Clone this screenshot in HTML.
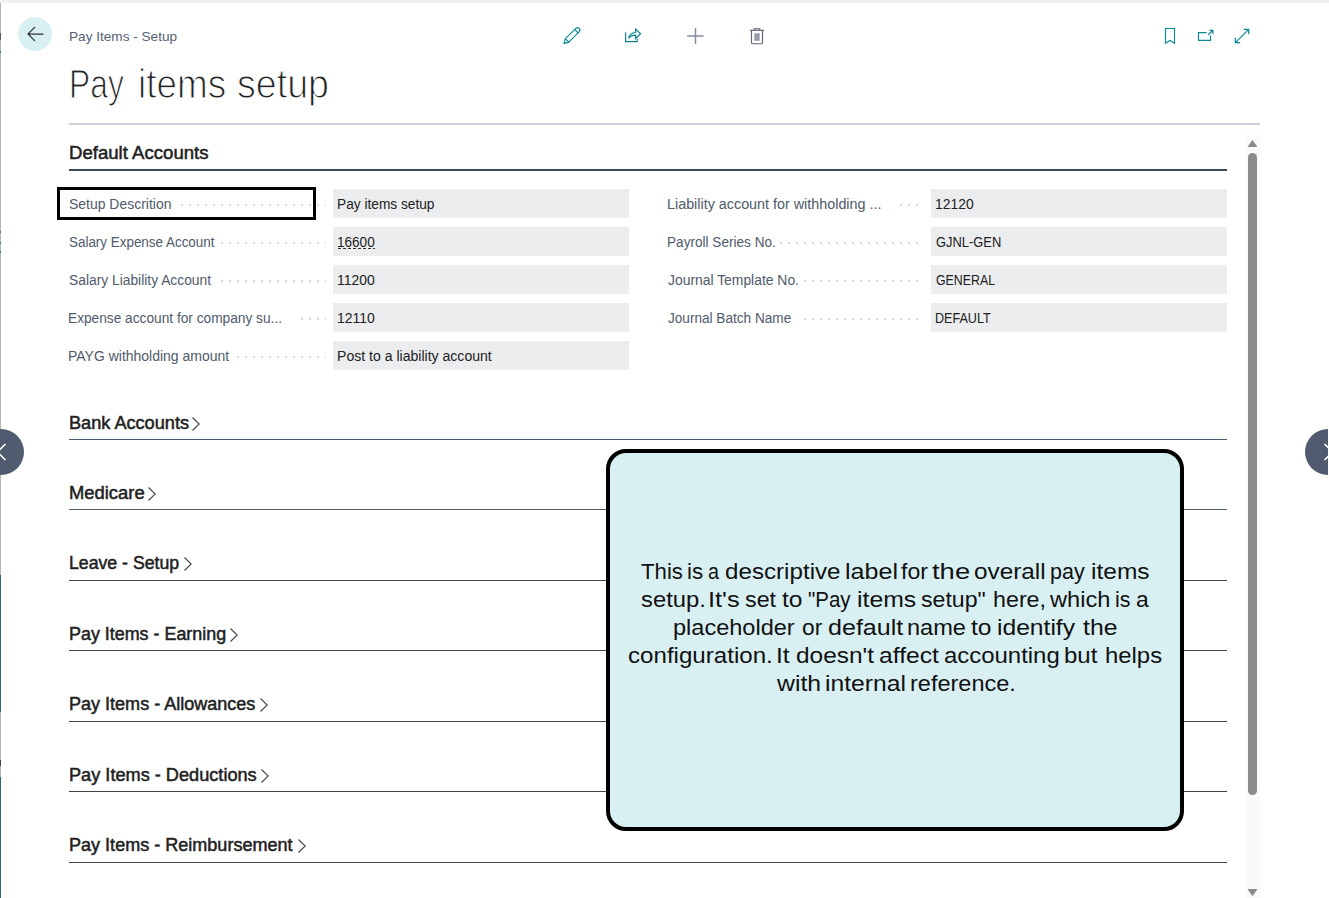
<!DOCTYPE html>
<html lang="en">
<head>
<meta charset="utf-8">
<title>Pay Items - Setup</title>
<style>
html,body{margin:0;padding:0;background:#fff;}
body{width:1329px;height:898px;position:relative;overflow:hidden;font-family:"Liberation Sans",sans-serif;}
.abs{position:absolute;}
.t{position:absolute;white-space:nowrap;transform-origin:0 0;margin:0;padding:0;}
.fld{position:absolute;background:#ecedef;height:29px;width:296px;}
.rule{position:absolute;left:69px;width:1158px;height:1px;background:#444;}
.dots{position:absolute;height:2px;background-image:linear-gradient(90deg,#d6d9de 0,#d6d9de 2px,transparent 2px);background-size:8px 2px;background-repeat:repeat-x;}
svg{position:absolute;overflow:visible;}
</style>
</head>
<body>
<!-- window chrome -->
<div class="abs" style="left:0;top:0;width:1329px;height:3px;background:#f0f0f0"></div>
<div class="abs" style="left:0;top:3px;width:1px;height:895px;background:#b6b6b6"></div>
<div class="abs" style="left:0;top:33px;width:1px;height:7px;background:#515a68"></div>
<div class="abs" style="left:0;top:51px;width:1px;height:2px;background:#3a8088"></div>
<div class="abs" style="left:0;top:231px;width:1px;height:2px;background:#3a8088"></div>
<div class="abs" style="left:0;top:242px;width:1px;height:2px;background:#3a8088"></div>
<div class="abs" style="left:0;top:251px;width:1px;height:2px;background:#3a8088"></div>
<div class="abs" style="left:0;top:575px;width:1px;height:137px;background:#2a6870"></div>
<div class="abs" style="left:0;top:760px;width:1px;height:6px;background:#444"></div>
<div class="abs" style="left:0;top:777px;width:1px;height:121px;background:#2a6870"></div>

<!-- back button -->
<div class="abs" style="left:18px;top:17px;width:34px;height:34px;border-radius:50%;background:#d9f0f3"></div>
<svg style="left:18px;top:17px" width="34" height="34" viewBox="0 0 34 34"><path d="M25 17H10.2M16.6 10.4L10 17l6.6 6.6" fill="none" stroke="#333" stroke-width="1.25" stroke-linecap="round" stroke-linejoin="miter"/></svg>

<!-- toolbar icons -->
<svg style="left:560px;top:24px" width="24" height="24" viewBox="0 0 24 24" fill="none" stroke="#0b8791" stroke-width="1.15" stroke-linejoin="round" stroke-linecap="round">
 <path d="M3.9 19.6l1.5-4.9L15.9 4.4a2.3 2.3 0 0 1 3.3 3.3L8.8 18.1z"/><path d="M5.4 14.7l3.4 3.4M14.8 5.6l3.3 3.3"/>
</svg>
<svg style="left:621px;top:24px" width="24" height="24" viewBox="0 0 24 24" fill="none" stroke="#0b8791" stroke-width="1.2" stroke-linejoin="miter">
 <path d="M4.6 8.3v9.3h11.6v-2.9"/><path d="M7.6 14.4c.6-3.6 3-5.8 7-5.9V5.1l5 4.7-5 4.7v-3.3c-3.100-.1-5.300.9-7 3.200z"/>
</svg>
<svg style="left:683px;top:24px" width="24" height="24" viewBox="0 0 24 24" fill="none" stroke="#858c9b" stroke-width="1.5">
 <path d="M12.500 4v16M4.200 12h16.400"/>
</svg>
<svg style="left:745px;top:24px" width="24" height="24" viewBox="0 0 24 24" fill="none" stroke="#5b6375" stroke-width="1.15">
 <path d="M5 6.300h14"/><path d="M9.300 6.200v-1.500h5.400v1.500"/><path d="M6.500 6.500v12.300a.9.9 0 0 0 .9.900h9.200a.9.900 0 0 0 .9-.900V6.500"/><path d="M9.200 9.300v7.500h5.600V9.300z" fill="#a3a9b5" stroke="none"/><path d="M10.900 9.300v7.500M13.100 9.300v7.500" stroke="#7d8494" stroke-width=".7"/>
</svg>
<svg style="left:1158px;top:24px" width="24" height="24" viewBox="0 0 24 24" fill="none" stroke="#0b8791" stroke-width="1.15" stroke-linejoin="miter">
 <path d="M7.500 4.500h9v14.800l-4.500-2.800-4.500 2.800z"/>
</svg>
<svg style="left:1194px;top:24px" width="24" height="24" viewBox="0 0 24 24" fill="none" stroke="#0b8791" stroke-width="1.2" stroke-linejoin="miter">
 <path d="M12.600 8.600H4.500v7.700h12v-4.800"/><path d="M14.200 11l4.600-4.600M15.300 6.300h3.600v3.600"/>
</svg>
<svg style="left:1230px;top:24px" width="24" height="24" viewBox="0 0 24 24" fill="none" stroke="#0b8791" stroke-width="1.2" stroke-linejoin="miter">
 <path d="M5.400 18.600L18.600 5.400M13.800 5.300h4.900v4.900M5.300 13.800v4.900h4.900"/>
</svg>

<!-- header rule -->
<div class="abs" style="left:69px;top:123px;width:1191px;height:2px;background:#cdd1d7"></div>

<!-- Default accounts rule -->
<div class="abs" style="left:69px;top:169px;width:1158px;height:2px;background:#3c485c"></div>

<!-- fields -->
<div class="fld" style="left:333px;top:189px"></div>
<div class="fld" style="left:333px;top:227px"></div>
<div class="fld" style="left:333px;top:265px"></div>
<div class="fld" style="left:333px;top:303px"></div>
<div class="fld" style="left:333px;top:341px"></div>
<div class="fld" style="left:931px;top:189px"></div>
<div class="fld" style="left:931px;top:227px"></div>
<div class="fld" style="left:931px;top:265px"></div>
<div class="fld" style="left:931px;top:303px"></div>

<!-- dotted leaders -->
<div class="dots" style="left:181px;top:204px;width:145px"></div>
<div class="dots" style="left:221px;top:242px;width:105px"></div>
<div class="dots" style="left:221px;top:280px;width:105px"></div>
<div class="dots" style="left:301px;top:318px;width:25px"></div>
<div class="dots" style="left:237px;top:356px;width:89px"></div>
<div class="dots" style="left:900px;top:204px;width:18px"></div>
<div class="dots" style="left:780px;top:242px;width:138px"></div>
<div class="dots" style="left:804px;top:280px;width:114px"></div>
<div class="dots" style="left:804px;top:318px;width:114px"></div>

<!-- focus box -->
<div class="abs" style="left:57px;top:187px;width:253px;height:27px;border:3px solid #000"></div>

<!-- lookup underline -->
<div class="abs" style="left:338px;top:248px;width:37px;height:1px;background-image:linear-gradient(90deg,#333 0,#333 3px,transparent 3px);background-size:5px 1px"></div>

<!-- collapsed group rules -->
<div class="rule" style="top:439px;background:#4e5a6e"></div>
<div class="rule" style="top:509px;background:#4e5a6e"></div>
<div class="rule" style="top:580px"></div>
<div class="rule" style="top:650px"></div>
<div class="rule" style="top:721px"></div>
<div class="rule" style="top:791px"></div>
<div class="rule" style="top:862px"></div>

<!-- chevrons -->
<svg style="left:191.4px;top:416.0px" width="10" height="16" viewBox="0 0 10 16"><path d="M1.500 1.500L8.200 8l-6.700 6.500" fill="none" stroke="#444" stroke-width="1.100"/></svg>
<svg style="left:147.2px;top:486.0px" width="10" height="16" viewBox="0 0 10 16"><path d="M1.500 1.500L8.200 8l-6.700 6.500" fill="none" stroke="#444" stroke-width="1.100"/></svg>
<svg style="left:182.9px;top:556.0px" width="10" height="16" viewBox="0 0 10 16"><path d="M1.500 1.500L8.200 8l-6.700 6.500" fill="none" stroke="#444" stroke-width="1.100"/></svg>
<svg style="left:229.2px;top:627.0px" width="10" height="16" viewBox="0 0 10 16"><path d="M1.500 1.500L8.200 8l-6.700 6.500" fill="none" stroke="#444" stroke-width="1.100"/></svg>
<svg style="left:259.0px;top:697.0px" width="10" height="16" viewBox="0 0 10 16"><path d="M1.500 1.500L8.200 8l-6.700 6.500" fill="none" stroke="#444" stroke-width="1.100"/></svg>
<svg style="left:260.0px;top:768.0px" width="10" height="16" viewBox="0 0 10 16"><path d="M1.500 1.500L8.200 8l-6.700 6.500" fill="none" stroke="#444" stroke-width="1.100"/></svg>
<svg style="left:296.5px;top:838.0px" width="10" height="16" viewBox="0 0 10 16"><path d="M1.500 1.500L8.200 8l-6.700 6.500" fill="none" stroke="#444" stroke-width="1.100"/></svg>

<!-- scrollbar -->
<div class="abs" style="left:1245px;top:135px;width:15px;height:763px;background:#fafafa"></div>
<div class="abs" style="left:1248px;top:153px;width:9px;height:642px;border-radius:4.5px;background:#8b8b8b"></div>
<svg style="left:1245px;top:135px" width="15" height="15" viewBox="0 0 15 15"><path d="M3.300 11.500L7.500 5.500l4.200 6z" fill="#8b8b8b" stroke="#8b8b8b" stroke-width="1" stroke-linejoin="round"/></svg>
<svg style="left:1245px;top:883px" width="15" height="15" viewBox="0 0 15 15"><path d="M3.300 6.500L7.500 12.500l4.200-6z" fill="#8b8b8b" stroke="#8b8b8b" stroke-width="1" stroke-linejoin="round"/></svg>

<!-- prev / next -->
<div class="abs" style="left:-22px;top:429px;width:46px;height:46px;border-radius:50%;background:#505b6f"></div>
<svg style="left:-8px;top:440px" width="24" height="24" viewBox="0 0 24 24"><path d="M13.500 4L5.200 12l8.300 8" fill="none" stroke="#fff" stroke-width="1.600"/></svg>
<div class="abs" style="left:1305px;top:429px;width:23px;height:46px;overflow:hidden"><div style="width:46px;height:46px;border-radius:50%;background:#505b6f"></div></div>
<div class="abs" style="left:1305px;top:429px;width:23px;height:46px;overflow:hidden"><svg style="left:8.500px;top:11px" width="24" height="24" viewBox="0 0 24 24"><path d="M10.500 4l8.300 8-8.300 8" fill="none" stroke="#fff" stroke-width="1.600"/></svg></div>

<!-- callout -->
<div class="abs" style="left:606px;top:449px;width:570px;height:374px;border:4px solid #000;border-radius:20px;background:#d9f0f3"></div>

<!-- text -->
<div class="t" style="left:68.64px;top:28.00px;font-size:12.8px;line-height:17px;color:#566176;font-family:'Liberation Sans',sans-serif;transform:scaleX(1.0623)">Pay Items - Setup</div>
<div class="cl">
<span class="t" style="left:69.13px;top:56.00px;font-size:41.5px;line-height:56px;color:#212121;font-family:'Liberation Sans',sans-serif;-webkit-text-stroke:1.15px #fff;transform:scaleX(0.7669)">Pay </span>
<span class="t" style="left:138.21px;top:56.00px;font-size:41.5px;line-height:56px;color:#212121;font-family:'Liberation Sans',sans-serif;-webkit-text-stroke:1.15px #fff;transform:scaleX(0.8885)">items </span>
<span class="t" style="left:237.29px;top:56.00px;font-size:41.5px;line-height:56px;color:#212121;font-family:'Liberation Sans',sans-serif;-webkit-text-stroke:1.15px #fff;transform:scaleX(0.9059)">setup </span>
</div>
<div class="t" style="left:69.11px;top:141.00px;font-size:18.0px;line-height:24px;color:#212121;font-family:'Liberation Sans',sans-serif;-webkit-text-stroke:0.5px currentColor;transform:scaleX(1.0330)">Default Accounts</div>
<div class="t" style="left:68.64px;top:195.00px;font-size:13.8px;line-height:19px;color:#4f5a6b;font-family:'Liberation Sans',sans-serif;transform:scaleX(1.0121)">Setup Descrition</div>
<div class="t" style="left:68.77px;top:233.00px;font-size:13.8px;line-height:19px;color:#4f5a6b;font-family:'Liberation Sans',sans-serif;transform:scaleX(0.9728)">Salary Expense Account</div>
<div class="t" style="left:68.75px;top:271.00px;font-size:13.8px;line-height:19px;color:#4f5a6b;font-family:'Liberation Sans',sans-serif;transform:scaleX(1.0014)">Salary Liability Account</div>
<div class="t" style="left:68.46px;top:309.00px;font-size:13.8px;line-height:19px;color:#4f5a6b;font-family:'Liberation Sans',sans-serif;transform:scaleX(0.9930)">Expense account for company su...</div>
<div class="t" style="left:68.43px;top:347.00px;font-size:13.8px;line-height:19px;color:#4f5a6b;font-family:'Liberation Sans',sans-serif;transform:scaleX(1.0136)">PAYG withholding amount</div>
<div class="t" style="left:667.10px;top:195.00px;font-size:13.8px;line-height:19px;color:#4f5a6b;font-family:'Liberation Sans',sans-serif;transform:scaleX(1.0395)">Liability account for withholding ...</div>
<div class="t" style="left:667.17px;top:233.00px;font-size:13.8px;line-height:19px;color:#4f5a6b;font-family:'Liberation Sans',sans-serif;transform:scaleX(0.9852)">Payroll Series No.</div>
<div class="t" style="left:668.15px;top:271.00px;font-size:13.8px;line-height:19px;color:#4f5a6b;font-family:'Liberation Sans',sans-serif;transform:scaleX(1.0066)">Journal Template No.</div>
<div class="t" style="left:668.15px;top:309.00px;font-size:13.8px;line-height:19px;color:#4f5a6b;font-family:'Liberation Sans',sans-serif;transform:scaleX(0.9855)">Journal Batch Name</div>
<div class="t" style="left:336.76px;top:195.00px;font-size:13.8px;line-height:19px;color:#212121;font-family:'Liberation Sans',sans-serif;transform:scaleX(0.9932)">Pay items setup</div>
<div class="t" style="left:337.42px;top:233.00px;font-size:13.8px;line-height:19px;color:#212121;font-family:'Liberation Sans',sans-serif;transform:scaleX(0.9823)">16600</div>
<div class="t" style="left:337.39px;top:271.00px;font-size:13.8px;line-height:19px;color:#212121;font-family:'Liberation Sans',sans-serif;transform:scaleX(1.0098)">11200</div>
<div class="t" style="left:337.39px;top:309.00px;font-size:13.8px;line-height:19px;color:#212121;font-family:'Liberation Sans',sans-serif;transform:scaleX(1.0098)">12110</div>
<div class="t" style="left:336.73px;top:347.00px;font-size:13.8px;line-height:19px;color:#212121;font-family:'Liberation Sans',sans-serif;transform:scaleX(1.0193)">Post to a liability account</div>
<div class="t" style="left:935.39px;top:195.00px;font-size:13.8px;line-height:19px;color:#212121;font-family:'Liberation Sans',sans-serif;transform:scaleX(1.0068)">12120</div>
<div class="t" style="left:935.70px;top:233.00px;font-size:13.8px;line-height:19px;color:#212121;font-family:'Liberation Sans',sans-serif;transform:scaleX(0.9353)">GJNL-GEN</div>
<div class="t" style="left:935.73px;top:271.00px;font-size:13.8px;line-height:19px;color:#212121;font-family:'Liberation Sans',sans-serif;transform:scaleX(0.8958)">GENERAL</div>
<div class="t" style="left:935.26px;top:309.00px;font-size:13.8px;line-height:19px;color:#212121;font-family:'Liberation Sans',sans-serif;transform:scaleX(0.9109)">DEFAULT</div>
<div class="t" style="left:68.94px;top:411.00px;font-size:18.0px;line-height:24px;color:#212121;font-family:'Liberation Sans',sans-serif;-webkit-text-stroke:0.5px currentColor;transform:scaleX(1.0077)">Bank Accounts</div>
<div class="t" style="left:68.92px;top:481.00px;font-size:18.0px;line-height:24px;color:#212121;font-family:'Liberation Sans',sans-serif;-webkit-text-stroke:0.5px currentColor;transform:scaleX(1.0215)">Medicare</div>
<div class="t" style="left:69.07px;top:551.00px;font-size:18.0px;line-height:24px;color:#212121;font-family:'Liberation Sans',sans-serif;-webkit-text-stroke:0.5px currentColor;transform:scaleX(0.9823)">Leave - Setup</div>
<div class="t" style="left:69.06px;top:622.00px;font-size:18.0px;line-height:24px;color:#212121;font-family:'Liberation Sans',sans-serif;-webkit-text-stroke:0.5px currentColor;transform:scaleX(0.9942)">Pay Items - Earning</div>
<div class="t" style="left:69.05px;top:692.00px;font-size:18.0px;line-height:24px;color:#212121;font-family:'Liberation Sans',sans-serif;-webkit-text-stroke:0.5px currentColor;transform:scaleX(1.0016)">Pay Items - Allowances</div>
<div class="t" style="left:69.04px;top:763.00px;font-size:18.0px;line-height:24px;color:#212121;font-family:'Liberation Sans',sans-serif;-webkit-text-stroke:0.5px currentColor;transform:scaleX(1.0087)">Pay Items - Deductions</div>
<div class="t" style="left:69.05px;top:833.00px;font-size:18.0px;line-height:24px;color:#212121;font-family:'Liberation Sans',sans-serif;-webkit-text-stroke:0.5px currentColor;transform:scaleX(1.0023)">Pay Items - Reimbursement</div>
<div class="cl">
<span class="t" style="left:640.80px;top:557.00px;font-size:22.3px;line-height:30px;color:#111;font-family:'Liberation Sans',sans-serif;transform:scaleX(0.9963)">This </span>
<span class="t" style="left:686.89px;top:557.00px;font-size:22.3px;line-height:30px;color:#111;font-family:'Liberation Sans',sans-serif;transform:scaleX(1.0036)">is </span>
<span class="t" style="left:708.41px;top:557.00px;font-size:22.3px;line-height:30px;color:#111;font-family:'Liberation Sans',sans-serif;transform:scaleX(0.8870)">a </span>
<span class="t" style="left:724.92px;top:557.00px;font-size:22.3px;line-height:30px;color:#111;font-family:'Liberation Sans',sans-serif;transform:scaleX(1.0842)">descriptive </span>
<span class="t" style="left:844.81px;top:557.00px;font-size:22.3px;line-height:30px;color:#111;font-family:'Liberation Sans',sans-serif;transform:scaleX(1.1250)">label </span>
<span class="t" style="left:900.84px;top:557.00px;font-size:22.3px;line-height:30px;color:#111;font-family:'Liberation Sans',sans-serif;transform:scaleX(1.0353)">for </span>
<span class="t" style="left:932.29px;top:557.00px;font-size:22.3px;line-height:30px;color:#111;font-family:'Liberation Sans',sans-serif;transform:scaleX(1.2303)">the </span>
<span class="t" style="left:974.21px;top:557.00px;font-size:22.3px;line-height:30px;color:#111;font-family:'Liberation Sans',sans-serif;transform:scaleX(1.0909)">overall </span>
<span class="t" style="left:1049.55px;top:557.00px;font-size:22.3px;line-height:30px;color:#111;font-family:'Liberation Sans',sans-serif;transform:scaleX(0.9635)">pay </span>
<span class="t" style="left:1091.35px;top:557.00px;font-size:22.3px;line-height:30px;color:#111;font-family:'Liberation Sans',sans-serif;transform:scaleX(1.1000)">items </span>
</div>
<div class="cl">
<span class="t" style="left:640.50px;top:585.00px;font-size:22.3px;line-height:30px;color:#111;font-family:'Liberation Sans',sans-serif;transform:scaleX(1.0672)">setup. </span>
<span class="t" style="left:708.02px;top:585.00px;font-size:22.3px;line-height:30px;color:#111;font-family:'Liberation Sans',sans-serif;transform:scaleX(1.1400)">It's </span>
<span class="t" style="left:744.52px;top:585.00px;font-size:22.3px;line-height:30px;color:#111;font-family:'Liberation Sans',sans-serif;transform:scaleX(1.0435)">set </span>
<span class="t" style="left:782.22px;top:585.00px;font-size:22.3px;line-height:30px;color:#111;font-family:'Liberation Sans',sans-serif;transform:scaleX(1.1029)">to </span>
<span class="t" style="left:807.98px;top:585.00px;font-size:22.3px;line-height:30px;color:#111;font-family:'Liberation Sans',sans-serif;transform:scaleX(0.9193)">&quot;Pay </span>
<span class="t" style="left:856.93px;top:585.00px;font-size:22.3px;line-height:30px;color:#111;font-family:'Liberation Sans',sans-serif;transform:scaleX(1.1118)">items </span>
<span class="t" style="left:920.62px;top:585.00px;font-size:22.3px;line-height:30px;color:#111;font-family:'Liberation Sans',sans-serif;transform:scaleX(1.0370)">setup&quot; </span>
<span class="t" style="left:993.43px;top:585.00px;font-size:22.3px;line-height:30px;color:#111;font-family:'Liberation Sans',sans-serif;transform:scaleX(1.0434)">here, </span>
<span class="t" style="left:1050.40px;top:585.00px;font-size:22.3px;line-height:30px;color:#111;font-family:'Liberation Sans',sans-serif;transform:scaleX(1.0613)">which </span>
<span class="t" style="left:1115.06px;top:585.00px;font-size:22.3px;line-height:30px;color:#111;font-family:'Liberation Sans',sans-serif;transform:scaleX(0.9600)">is </span>
<span class="t" style="left:1135.77px;top:585.00px;font-size:22.3px;line-height:30px;color:#111;font-family:'Liberation Sans',sans-serif;transform:scaleX(1.0261)">a </span>
</div>
<div class="cl">
<span class="t" style="left:673.22px;top:613.00px;font-size:22.3px;line-height:30px;color:#111;font-family:'Liberation Sans',sans-serif;transform:scaleX(1.0555)">placeholder </span>
<span class="t" style="left:801.78px;top:613.00px;font-size:22.3px;line-height:30px;color:#111;font-family:'Liberation Sans',sans-serif;transform:scaleX(1.0216)">or </span>
<span class="t" style="left:828.08px;top:613.00px;font-size:22.3px;line-height:30px;color:#111;font-family:'Liberation Sans',sans-serif;transform:scaleX(1.1240)">default </span>
<span class="t" style="left:907.21px;top:613.00px;font-size:22.3px;line-height:30px;color:#111;font-family:'Liberation Sans',sans-serif;transform:scaleX(1.0573)">name </span>
<span class="t" style="left:970.92px;top:613.00px;font-size:22.3px;line-height:30px;color:#111;font-family:'Liberation Sans',sans-serif;transform:scaleX(1.1029)">to </span>
<span class="t" style="left:996.94px;top:613.00px;font-size:22.3px;line-height:30px;color:#111;font-family:'Liberation Sans',sans-serif;transform:scaleX(1.1043)">identify </span>
<span class="t" style="left:1082.62px;top:613.00px;font-size:22.3px;line-height:30px;color:#111;font-family:'Liberation Sans',sans-serif;transform:scaleX(1.1126)">the </span>
</div>
<div class="cl">
<span class="t" style="left:628.42px;top:641.00px;font-size:22.3px;line-height:30px;color:#111;font-family:'Liberation Sans',sans-serif;transform:scaleX(1.0815)">configuration. </span>
<span class="t" style="left:776.21px;top:641.00px;font-size:22.3px;line-height:30px;color:#111;font-family:'Liberation Sans',sans-serif;transform:scaleX(1.0927)">It </span>
<span class="t" style="left:796.21px;top:641.00px;font-size:22.3px;line-height:30px;color:#111;font-family:'Liberation Sans',sans-serif;transform:scaleX(1.0943)">doesn't </span>
<span class="t" style="left:878.89px;top:641.00px;font-size:22.3px;line-height:30px;color:#111;font-family:'Liberation Sans',sans-serif;transform:scaleX(1.1075)">affect </span>
<span class="t" style="left:944.33px;top:641.00px;font-size:22.3px;line-height:30px;color:#111;font-family:'Liberation Sans',sans-serif;transform:scaleX(1.0730)">accounting </span>
<span class="t" style="left:1064.08px;top:641.00px;font-size:22.3px;line-height:30px;color:#111;font-family:'Liberation Sans',sans-serif;transform:scaleX(1.0769)">but </span>
<span class="t" style="left:1104.69px;top:641.00px;font-size:22.3px;line-height:30px;color:#111;font-family:'Liberation Sans',sans-serif;transform:scaleX(1.0706)">helps </span>
</div>
<div class="cl">
<span class="t" style="left:776.70px;top:669.00px;font-size:22.3px;line-height:30px;color:#111;font-family:'Liberation Sans',sans-serif;transform:scaleX(1.1137)">with </span>
<span class="t" style="left:824.94px;top:669.00px;font-size:22.3px;line-height:30px;color:#111;font-family:'Liberation Sans',sans-serif;transform:scaleX(1.1060)">internal </span>
<span class="t" style="left:909.82px;top:669.00px;font-size:22.3px;line-height:30px;color:#111;font-family:'Liberation Sans',sans-serif;transform:scaleX(1.0543)">reference. </span>
</div>
</body>
</html>
